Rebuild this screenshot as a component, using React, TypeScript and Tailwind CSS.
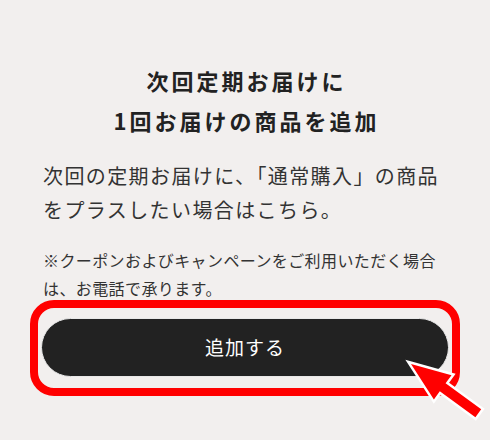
const jp = "font-['Noto_Sans_CJK_JP','Noto_Sans',sans-serif]";

function PointerArrow() {
  return (
    <svg
      className="absolute inset-0 pointer-events-none"
      width="490"
      height="440"
      viewBox="0 0 490 440"
    >
      <polygon
        points="411,364 451.5,375.2 445.6,383.3 481.2,409.2 475.4,417.2 439.8,391.3 433.9,399.4"
        fill="#ff0000"
        stroke="#ffffff"
        strokeWidth="5"
        strokeLinejoin="miter"
        paintOrder="stroke"
      />
    </svg>
  );
}

export default function App() {
  return (
    <div className={`relative w-[490px] h-[440px] overflow-hidden bg-[#f2efee] ${jp}`}>
      <div className="px-[30px] pt-[60px]">
        <h2 className="text-center text-[22px] leading-[40px] font-bold tracking-[3px] text-[#222] pl-[3px]">
          次回定期お届けに
          <br />
          1回お届けの商品を追加
        </h2>

        <p className="mt-[19px] px-[13px] text-[20px] leading-[34px] tracking-[1.4px] text-[#333] whitespace-nowrap">
          次回の定期お届けに、「通常購入」の商品
          <br />
          をプラスしたい場合はこちら。
        </p>

        <p className="mt-[19px] px-[13px] text-[16px] leading-[28px] tracking-[0.4px] text-[#333] whitespace-nowrap">
          ※クーポンおよびキャンペーンをご利用いただく場合
          <br />
          は、お電話で承ります。
        </p>

        <div className="-mt-[2px] border-[8px] border-[#ff0000] rounded-[24px] px-[3px] pt-[10px] pb-[11px]">
          <button className="flex items-center justify-center w-full h-[59px] rounded-full bg-[#222] border border-[#e8e8e8] text-white text-[19px] tracking-[1px]">
            追加する
          </button>
        </div>
      </div>

      <PointerArrow />
    </div>
  );
}
